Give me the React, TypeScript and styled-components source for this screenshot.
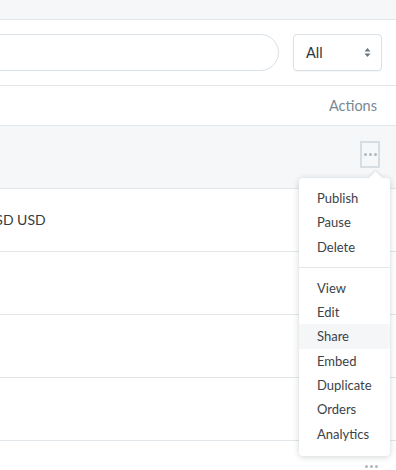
import React from "react";
import styled, { createGlobalStyle } from "styled-components";

const Global = createGlobalStyle`
  html, body { margin: 0; padding: 0; background: #ffffff; }
  body { font-family: Lato, "Open Sans", sans-serif; color: #3b4248; overflow: hidden; }
  * { box-sizing: border-box; }
`;

const Page = styled.div`
  position: relative;
  width: 396px;
  height: 470px;
  overflow: hidden;
`;

const TopBar = styled.div`
  height: 20px;
  background: #f5f7f9;
  border-bottom: 1px solid #e1e6ea;
`;

const Toolbar = styled.div`
  height: 66px;
  display: flex;
  align-items: center;
  gap: 14px;
  padding-right: 14px;
  border-bottom: 1px solid #e1e6ea;
`;

const Search = styled.div`
  flex: 1;
  margin-left: -40px;
  height: 37px;
  border: 1px solid #d9e0e6;
  border-radius: 19px;
  background: #fff;
`;

const Select = styled.div`
  width: 89px;
  height: 37px;
  border: 1px solid #d9e0e6;
  border-radius: 4px;
  display: flex;
  align-items: center;
  justify-content: space-between;
  padding: 0 10px 0 12px;
  font-size: 14.5px;
  color: #2f363c;
  box-shadow: 0 1px 1px rgba(0, 0, 0, 0.04);
`;

const HeaderRow = styled.div`
  height: 40px;
  display: flex;
  align-items: center;
  justify-content: flex-end;
  padding-right: 19px;
  border-bottom: 1px solid #e1e6ea;
  font-size: 14.5px;
  color: #7a8893;
`;

const Row = styled.div<{ $hover?: boolean }>`
  height: 63px;
  display: flex;
  align-items: center;
  justify-content: space-between;
  padding-right: 16px;
  border-bottom: 1px solid #e1e6ea;
  background: ${(p) => (p.$hover ? "#f5f7f9" : "#fff")};
`;

const Cell = styled.div`
  margin-left: -15px;
  font-size: 14px;
  color: #343b41;
  padding-bottom: 2px;
`;

const MoreButton = styled.div<{ $active?: boolean }>`
  width: 20px;
  height: 27px;
  border: 2px solid ${(p) => (p.$active ? "#d6dee4" : "transparent")};
  display: flex;
  align-items: center;
  justify-content: center;
  gap: 2px;
  margin-top: ${(p) => (p.$active ? "-6px" : "0")};
`;

const Dot = styled.span`
  width: 3px;
  height: 3px;
  border-radius: 50%;
  background: #aeb8c0;
`;

const Menu = styled.div`
  position: absolute;
  left: 299px;
  top: 178px;
  width: 91px;
  padding: 8px 0 10px;
  background: #fff;
  border-radius: 4px;
  box-shadow: 0 1px 6px rgba(30, 45, 60, 0.2);
  &::before {
    content: "";
    position: absolute;
    top: -5px;
    left: 72px;
    width: 9px;
    height: 9px;
    background: #fff;
    transform: rotate(45deg);
    box-shadow: -1px -1px 2px rgba(30, 45, 60, 0.1);
  }
`;

const Item = styled.div<{ $active?: boolean }>`
  position: relative;
  height: 24.3px;
  line-height: 24.3px;
  padding-left: 18px;
  font-size: 13px;
  color: #3b4248;
  background: ${(p) => (p.$active ? "#f4f6f8" : "transparent")};
`;

const Divider = styled.div`
  height: 1px;
  background: #e1e6ea;
  margin: 8px 0;
`;

const BottomDots = styled.div`
  position: absolute;
  left: 365px;
  top: 465px;
  display: flex;
  gap: 2px;
`;

const Dots = () => (
  <>
    <Dot />
    <Dot />
    <Dot />
  </>
);

export default function App() {
  return (
    <Page>
      <Global />
      <TopBar />
      <Toolbar>
        <Search />
        <Select>
          <span>All</span>
          <svg width="7" height="11" viewBox="0 0 7 11">
            <path d="M3.5 1 L6.5 4.5 L0.5 4.5 Z" fill="#6b757d" />
            <path d="M3.5 10 L6.5 6.5 L0.5 6.5 Z" fill="#6b757d" />
          </svg>
        </Select>
      </Toolbar>
      <HeaderRow>Actions</HeaderRow>
      <Row $hover>
        <span />
        <MoreButton $active>
          <Dots />
        </MoreButton>
      </Row>
      <Row>
        <Cell>USD USD</Cell>
      </Row>
      <Row />
      <Row />
      <Row />
      <BottomDots>
        <Dots />
      </BottomDots>
      <Menu>
        <Item>Publish</Item>
        <Item>Pause</Item>
        <Item>Delete</Item>
        <Divider />
        <Item>View</Item>
        <Item>Edit</Item>
        <Item $active>Share</Item>
        <Item>Embed</Item>
        <Item>Duplicate</Item>
        <Item>Orders</Item>
        <Item>Analytics</Item>
      </Menu>
    </Page>
  );
}
